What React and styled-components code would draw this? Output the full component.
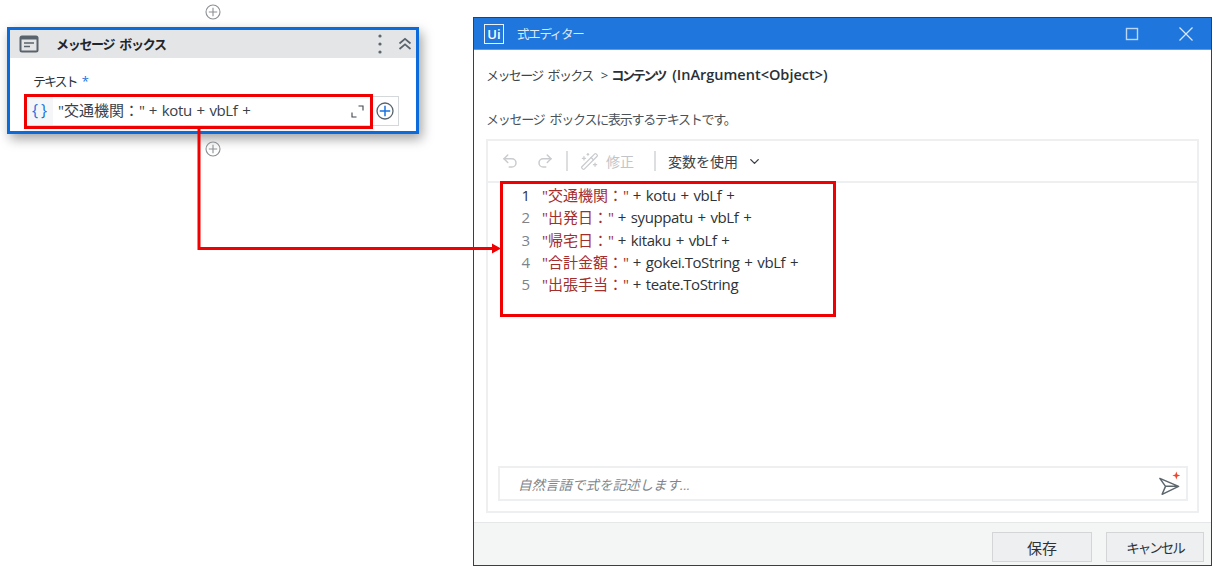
import React from "react";
import styled, { createGlobalStyle } from "styled-components";
import { Undo2, Redo2, WandSparkles, ChevronDown } from "lucide-react";

const Global = createGlobalStyle`
  html, body {
    margin: 0;
    background: #fff;
  }
  * {
    box-sizing: border-box;
  }
`;

const FONT = `"Open Sans", "Noto Sans CJK JP", sans-serif`;

const Page = styled.div`
  position: relative;
  width: 1221px;
  height: 573px;
  overflow: hidden;
  display: flex;
  align-items: flex-start;
  padding: 4px 0 0 7px;
  font-family: ${FONT};
  color: #333a42;
`;

const Workflow = styled.div`
  width: 412px;
  display: flex;
  flex-direction: column;
  align-items: center;
  gap: 7px;
`;

const AddDot = styled.svg`
  display: block;
  width: 16px;
  height: 16px;
  fill: none;
  stroke: #8b8f94;
  stroke-width: 1.1;
`;

const Card = styled.section`
  width: 412px;
  height: 107px;
  border: 3px solid #0b6bdc;
  background: #fff;
  box-shadow: 3px 5px 11px rgba(0, 0, 0, 0.36);
`;

const CardHead = styled.header`
  height: 28px;
  background: #e4e5e7;
  display: flex;
  align-items: center;
  padding: 0 4px 0 9px;
`;

const CardTitle = styled.span`
  flex: 1;
  margin-left: 17px;
  padding-bottom: 2px;
  font-size: 13px;
  font-weight: 600;
  color: #20262c;
  letter-spacing: -1.3px;
  word-spacing: 3px;
`;

const CardBody = styled.div`
  padding: 13px 17px 0 16px;
`;

const FieldLabel = styled.div`
  height: 20px;
  margin-left: 7px;
  font-size: 13px;
  line-height: 20px;
  color: #2c3238;
  letter-spacing: -2px;

  b {
    margin-left: 5px;
    color: #1a73e0;
    font-weight: 400;
  }
`;

const FieldRow = styled.div`
  display: flex;
  height: 30px;
  margin-top: 5px;
`;

const Field = styled.div`
  width: 349px;
  display: flex;
  align-items: center;
  border: 1px solid #d5d8da;
`;

const Braces = styled.span`
  width: 26px;
  height: 100%;
  display: flex;
  align-items: center;
  justify-content: center;
  padding: 0 0 2px 2px;
  background: #f4f6f7;
  color: #1a73e0;
  font-size: 16px;
  letter-spacing: 3px;
`;

const FieldText = styled.span`
  flex: 1;
  margin-left: 5px;
  padding-bottom: 3px;
  font-size: 15px;
  color: #3a4148;
  white-space: pre;
`;

const Expr = styled.span`
  letter-spacing: -0.4px;
  word-spacing: 1.3px;
`;

const AddBox = styled.div`
  width: 27px;
  display: flex;
  align-items: center;
  justify-content: center;
  border: 1px solid #d5d8da;
  border-left: none;
`;

const Dialog = styled.section`
  width: 739px;
  height: 549px;
  margin: 13px 0 0 54px;
  border: 1px solid #3a3f44;
  background: #fff;
  display: flex;
  flex-direction: column;
`;

const TitleBar = styled.header`
  height: 32px;
  flex: none;
  display: flex;
  align-items: center;
  background: #1f76dc;
  border-bottom: 1px solid #5b9be8;
  padding: 0 17px 0 10px;
  color: #fff;
`;

const Logo = styled.span`
  width: 20px;
  height: 20px;
  border: 1.5px solid #e8f1fc;
  display: flex;
  align-items: center;
  justify-content: center;
  font-size: 13px;
  font-weight: 600;
`;

const TitleText = styled.span`
  flex: 1;
  margin-left: 13px;
  font-size: 12.5px;
  color: #dce9fa;
  letter-spacing: -1.3px;
`;

const WinIcon = styled.svg`
  display: block;
  width: 16px;
  height: 16px;
  margin-left: ${(p) => p.$left || 0}px;
  fill: none;
  stroke: #dce9fa;
  stroke-width: 1.2;
`;

const Content = styled.div`
  flex: 1;
  display: flex;
  flex-direction: column;
  padding: 0 12px;
  min-height: 0;
`;

const Crumbs = styled.div`
  display: flex;
  align-items: center;
  height: 20px;
  margin-top: 15px;
  font-size: 13px;
  line-height: 20px;
  color: #3d444b;
  white-space: pre;
`;

const Kana = styled.span`
  letter-spacing: ${(p) => p.$spacing}px;
  word-spacing: 3px;
  font-weight: ${(p) => p.$weight || 400};
  color: ${(p) => p.$color || "inherit"};
`;

const Sep = styled.span`
  margin: 0 3px 0 8px;
`;

const ArgType = styled.span`
  margin-left: 7px;
  font-size: 14.5px;
  font-weight: 600;
  color: #2a3036;
`;

const Hint = styled.div`
  height: 20px;
  margin-top: 24px;
  font-size: 13px;
  line-height: 20px;
  color: #4a5157;
  letter-spacing: -1.25px;
  word-spacing: 3px;
`;

const EditorPanel = styled.div`
  width: 713px;
  height: 374px;
  margin-top: 10px;
  border: 2px solid #eeeff0;
  display: flex;
  flex-direction: column;
`;

const Toolbar = styled.div`
  height: 42px;
  flex: none;
  display: flex;
  align-items: center;
  padding-left: 13px;
  border-bottom: 2px solid #eeeff0;
`;

const ToolIcon = styled.span`
  display: flex;
  margin-left: ${(p) => p.$before || 0}px;
  margin-right: ${(p) => p.$gap || 0}px;
  color: ${(p) => p.$color || "#c9cbce"};
`;

const Divider = styled.span`
  width: 2px;
  height: 20px;
  background: #dcdee0;
  margin: 0 ${(p) => p.$right}px 0 ${(p) => p.$left}px;
`;

const ToolText = styled.span`
  font-size: 14px;
  color: ${(p) => p.$color};
`;

const Code = styled.div`
  flex: 1;
  padding-top: 1px;
`;

const Line = styled.div`
  display: flex;
  height: 22.3px;
  line-height: 22.3px;
  font-size: 15px;
  white-space: pre;
  color: #2d3339;
`;

const LineNo = styled.span`
  width: 42px;
  text-align: right;
  color: ${(p) => (p.$active ? "#2d3339" : "#7d8388")};
`;

const Str = styled.span`
  margin-left: 12px;
  color: #a32e2e;
`;

const Prompt = styled.div`
  flex: none;
  height: 35px;
  margin: 0 9px 10px 10px;
  border: 2px solid #eeeff0;
  display: flex;
  align-items: center;
  justify-content: space-between;
  padding: 0 4px 0 18px;
`;

const PromptText = styled.span`
  font-size: 13.5px;
  font-style: italic;
  color: #7f858a;
`;

const Footer = styled.footer`
  height: 43px;
  flex: none;
  margin-top: 9px;
  display: flex;
  justify-content: flex-end;
  align-items: flex-start;
  gap: 14px;
  padding: 9px 7px 0 0;
  background: #f4f5f5;
  border-top: 1px solid #e6e7e8;
`;

const Btn = styled.button`
  width: ${(p) => p.$w}px;
  height: 30px;
  border: 1px solid #d3d5d7;
  background: #eeeff1;
  font-family: ${FONT};
  font-size: ${(p) => p.$size}px;
  letter-spacing: ${(p) => p.$spacing || 0}px;
  color: #2d3339;
  padding: 0;
`;

const Highlight = styled.div`
  position: absolute;
  left: ${(p) => p.$x}px;
  top: ${(p) => p.$y}px;
  width: ${(p) => p.$w}px;
  height: ${(p) => p.$h}px;
  border: 3px solid #f00000;
  pointer-events: none;
`;

const Connector = styled.svg`
  position: absolute;
  left: 0;
  top: 0;
  pointer-events: none;
`;

const PlusCircle = () => (
  <AddDot viewBox="0 0 16 16">
    <circle cx="8" cy="8" r="7" />
    <path d="M8 3.8v8.4M3.8 8h8.4" />
  </AddDot>
);

const lines = [
  ['"交通機関：" ', "+ kotu + vbLf +"],
  ['"出発日：" ', "+ syuppatu + vbLf +"],
  ['"帰宅日：" ', "+ kitaku + vbLf +"],
  ['"合計金額：" ', "+ gokei.ToString + vbLf +"],
  ['"出張手当：" ', "+ teate.ToString"],
];

export default function App() {
  return (
    <Page>
      <Global />
      <Workflow>
        <PlusCircle />
        <Card>
          <CardHead>
            <svg width="20" height="18" viewBox="0 0 20 18">
              <rect x="0.5" y="0.5" width="19" height="17" rx="2.5" fill="#59636b" />
              <rect x="2.5" y="4.5" width="15" height="11" fill="#e4e5e7" />
              <path d="M5 8h10M5 11.5h6" stroke="#59636b" strokeWidth="1.6" />
            </svg>
            <CardTitle>メッセージ ボックス</CardTitle>
            <svg width="6" height="22" viewBox="0 0 6 22">
              <circle cx="3" cy="3" r="1.6" fill="#5c656c" />
              <circle cx="3" cy="11" r="1.6" fill="#5c656c" />
              <circle cx="3" cy="19" r="1.6" fill="#5c656c" />
            </svg>
            <svg style={{ marginLeft: 15 }} width="14" height="14" viewBox="0 0 14 14" fill="none" stroke="#59636b" strokeWidth="1.7">
              <path d="M1.5 6.5 7 1.8l5.5 4.7M1.5 12 7 7.3 12.5 12" />
            </svg>
          </CardHead>
          <CardBody>
            <FieldLabel>テキスト<b>*</b></FieldLabel>
            <FieldRow>
              <Field>
                <Braces>{"{}"}</Braces>
                <FieldText>"交通機関：" <Expr>+ kotu + vbLf +</Expr></FieldText>
                <svg style={{ marginRight: 7 }} width="13" height="13" viewBox="0 0 13 13" fill="none" stroke="#3f464d" strokeWidth="1.1">
                  <path d="M7.5 1h4.5v4.5M1 7.5V12h4.5" />
                </svg>
              </Field>
              <AddBox>
                <svg width="18" height="18" viewBox="0 0 18 18" fill="none">
                  <circle cx="9" cy="9" r="8" stroke="#59636b" strokeWidth="1.3" />
                  <path d="M9 3.8v10.4M3.8 9h10.4" stroke="#1a73e0" strokeWidth="1.5" />
                </svg>
              </AddBox>
            </FieldRow>
          </CardBody>
        </Card>
        <PlusCircle />
      </Workflow>

      <Dialog>
        <TitleBar>
          <Logo>Ui</Logo>
          <TitleText>式エディター</TitleText>
          <WinIcon viewBox="0 0 16 16">
            <rect x="2.5" y="2.5" width="11" height="11" stroke="#bcd6f6" strokeWidth="1.4" />
          </WinIcon>
          <WinIcon $left={38} viewBox="0 0 16 16">
            <path d="M1.5 1.5l13 13M14.5 1.5l-13 13" />
          </WinIcon>
        </TitleBar>
        <Content>
          <Crumbs>
            <Kana $spacing={-1.6}>メッセージ ボックス</Kana>
            <Sep>&gt;</Sep>
            <Kana $spacing={-2.2} $weight={600} $color="#2a3036">コンテンツ</Kana>
            <ArgType>(InArgument&lt;Object&gt;)</ArgType>
          </Crumbs>
          <Hint>メッセージ ボックスに表示するテキストです。</Hint>
          <EditorPanel>
            <Toolbar>
              <ToolIcon $gap={17}><Undo2 size={18} strokeWidth={2} /></ToolIcon>
              <ToolIcon><Redo2 size={18} strokeWidth={2} /></ToolIcon>
              <Divider $left={12} $right={12} />
              <ToolIcon $gap={7}><WandSparkles size={19} strokeWidth={1.6} /></ToolIcon>
              <ToolText $color="#c2c4c7">修正</ToolText>
              <Divider $left={20} $right={12} />
              <ToolText $color="#3a4148">変数を使用</ToolText>
              <ToolIcon $color="#3a4148" $before={9}><ChevronDown size={15} strokeWidth={2.2} /></ToolIcon>
            </Toolbar>
            <Code>
              {lines.map(([str, rest], i) => (
                <Line key={i}>
                  <LineNo $active={i === 0}>{i + 1}</LineNo>
                  <Str>{str}</Str>
                  <Expr>{rest}</Expr>
                </Line>
              ))}
            </Code>
            <Prompt>
              <PromptText>自然言語で式を記述します...</PromptText>
              <svg width="25" height="25" viewBox="0 0 22 22" fill="none">
                <path d="M2.5 6.5 19 13.5 4.5 20.5 7.5 13.5Z M7.5 13.5H19" stroke="#5d666d" strokeWidth="1.3" strokeLinejoin="round" />
                <path d="M17 0.5l.9 2.6 2.6.9-2.6.9-.9 2.6-.9-2.6-2.6-.9 2.6-.9Z" fill="#f0442c" />
              </svg>
            </Prompt>
          </EditorPanel>
        </Content>
        <Footer>
          <Btn $w={100} $size={15}>保存</Btn>
          <Btn $w={98} $size={13.5} $spacing={-2}>キャンセル</Btn>
        </Footer>
      </Dialog>

      <Highlight $x={24} $y={94} $w={349} $h={35} />
      <Highlight $x={500} $y={181} $w={336} $h={136} />
      <Connector width="1221" height="573" viewBox="0 0 1221 573" fill="none">
        <path d="M199 128V248.5H493" stroke="#f00000" strokeWidth="3" />
        <path d="M492 243.5l9 5-9 5Z" fill="#f00000" />
      </Connector>
    </Page>
  );
}
